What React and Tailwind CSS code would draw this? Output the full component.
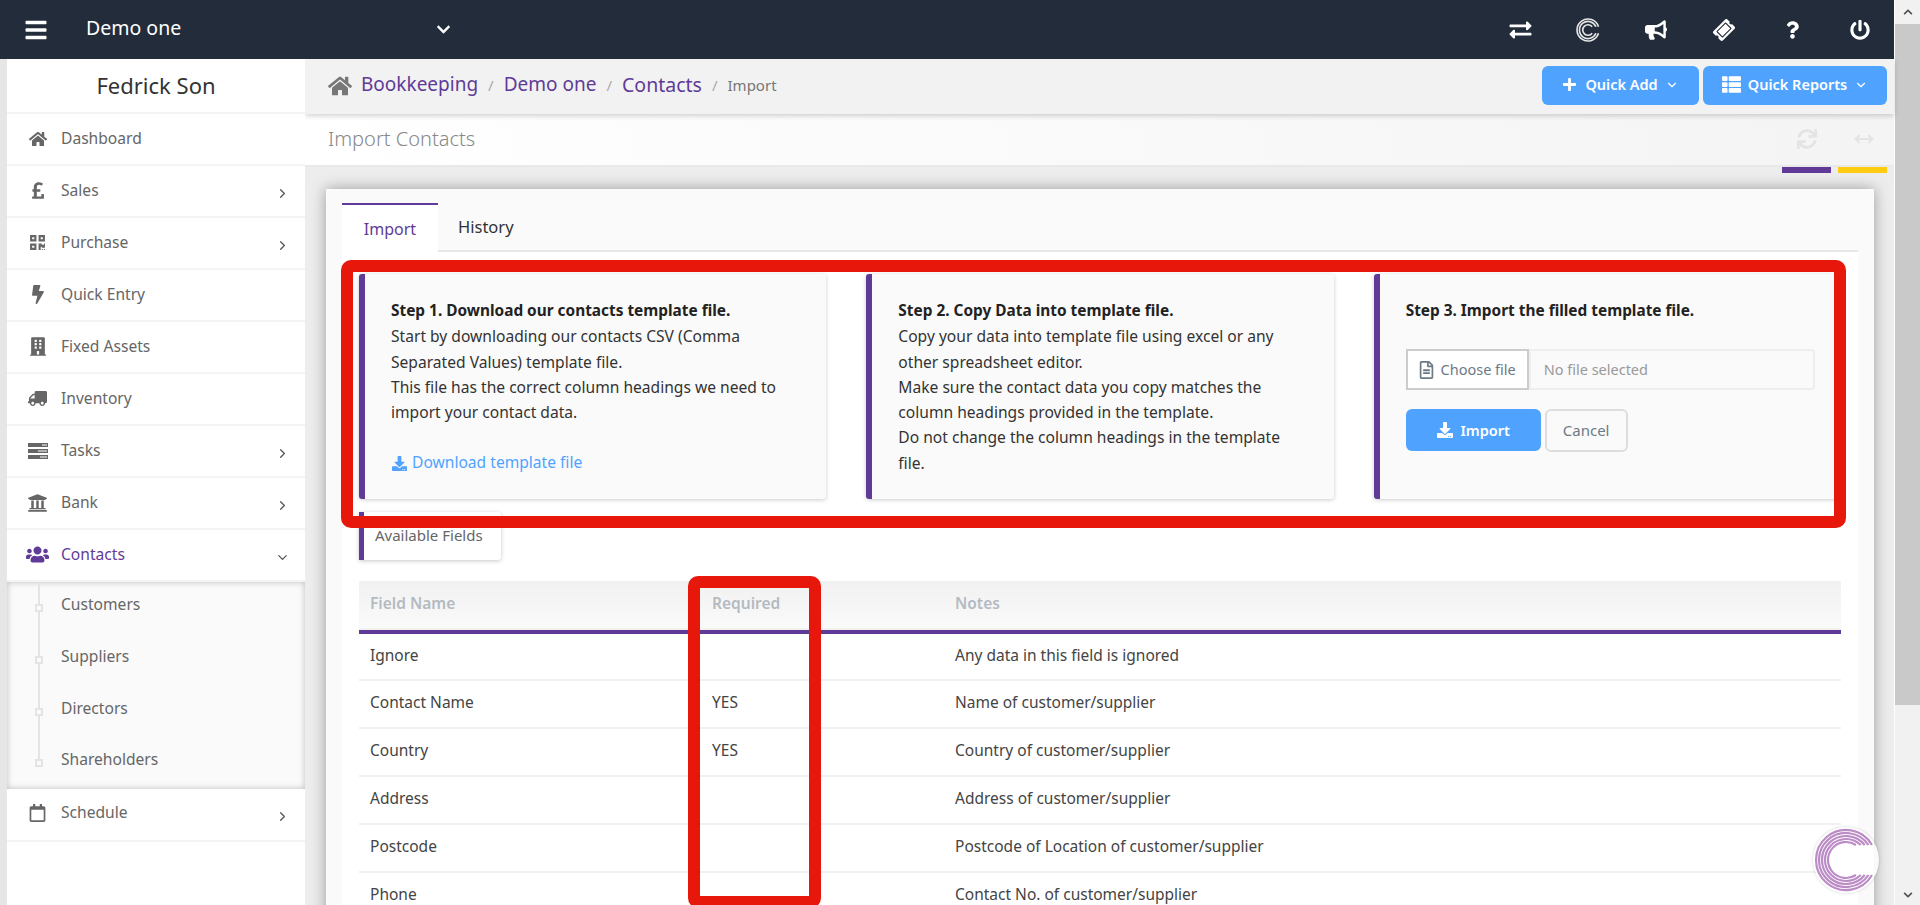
import {
    FaBars, FaBolt, FaBuilding, FaBullhorn, FaChevronDown, FaChevronUp, FaDownload, FaExchangeAlt,
    FaHome, FaPlus, FaPoundSign, FaPowerOff, FaQrcode, FaQuestion, FaRegCalendar, FaRegFileAlt,
    FaSync, FaThList, FaTicketAlt, FaTruck, FaUniversity, FaUsers,
} from 'react-icons/fa';
import { ChevronDown, ChevronRight, MoveHorizontal } from 'lucide-react';

function TasksIcon() {
    return (
        <svg viewBox="0 0 20 16" className="w-[20px] h-[16px]" fill="currentColor">
            <path d="M0 0h20v4H0zM0 6h20v4H0zM0 12h20v4H0z" />
            <path d="M14 1.5h5v1h-5zM10 7.5h9v1h-9zM12 13.5h7v1h-7z" fill="#fff" />
        </svg>
    );
}

// concentric C, used for the header icon and the floating logo
function RingsC({ size, color, rings, stroke, gap }) {
    return (
        <svg viewBox="0 0 64 64" width={size} height={size} fill="none" stroke={color}>
            {rings.map((r) => {
                const dx = Math.sqrt(r * r - gap * gap);
                return (
                    <path
                        key={r}
                        d={`M ${32 + dx} ${32 - gap} A ${r} ${r} 0 1 0 ${32 + dx} ${32 + gap}`}
                        strokeWidth={stroke}
                    />
                );
            })}
        </svg>
    );
}

const menu = [
    { label: 'Dashboard', icon: <FaHome className="w-[18px] h-[18px]" /> },
    { label: 'Sales', icon: <FaPoundSign className="w-[16px] h-[19px]" />, arrow: true },
    { label: 'Purchase', icon: <FaQrcode className="w-[17px] h-[17px]" />, arrow: true },
    { label: 'Quick Entry', icon: <FaBolt className="w-[14px] h-[19px]" /> },
    { label: 'Fixed Assets', icon: <FaBuilding className="w-[16px] h-[19px]" /> },
    { label: 'Inventory', icon: <FaTruck className="w-[19px] h-[17px] -scale-x-100" /> },
    { label: 'Tasks', icon: <TasksIcon />, arrow: true },
    { label: 'Bank', icon: <FaUniversity className="w-[21px] h-[20px]" />, arrow: true },
    { label: 'Contacts', icon: <FaUsers className="w-[23px] h-[23px]" />, open: true },
];

function MenuRow({ item }) {
    return (
        <div className={`h-[52px] flex items-center pl-[19px] pr-[15px] pb-[1px] border-b-2 border-[#f4f4f4] ${item.open ? 'text-[#5f3b97]' : 'text-[#666]'}`}>
            <span className="w-[23px] flex justify-center shrink-0">{item.icon}</span>
            <span className="ml-[12px] flex-1 text-[15.6px]">{item.label}</span>
            {item.arrow && <ChevronRight className="w-[15px] h-[15px] mt-[6px] text-[#555]" />}
            {item.open && <ChevronDown className="w-[15px] h-[15px] mt-[6px] text-[#555]" />}
        </div>
    );
}

function Sidebar() {
    return (
        <aside className="w-[298px] ml-[7px] bg-white shrink-0 relative z-10">
            <div className="h-[55px] flex items-center justify-center border-b-2 border-[#f4f4f4] text-[22px] text-[#333]">
                Fedrick Son
            </div>
            {menu.map((m) => (
                <MenuRow key={m.label} item={m} />
            ))}
            <div className="h-[207px] bg-[#fafafa] shadow-[inset_0_0_6px_rgba(0,0,0,0.25)]">
                <ul className="ml-[31px] border-l-2 border-[#e4e4e4] h-[180px]">
                    {['Customers', 'Suppliers', 'Directors', 'Shareholders'].map((s) => (
                        <li key={s} className="relative h-[51.75px] flex items-center pl-[21px] pb-[6px] text-[15.6px] text-[#666]">
                            <span className="absolute -left-[5px] top-[22px] w-[8px] h-[8px] border-2 border-[#e4e4e4] bg-[#fafafa]" />
                            {s}
                        </li>
                    ))}
                </ul>
            </div>
            <div className="h-[53px] flex items-center pl-[19px] pr-[15px] pb-[4px] border-b-2 border-[#f4f4f4] text-[#666]">
                <span className="w-[23px] flex justify-center shrink-0"><FaRegCalendar className="w-[17px] h-[18px]" /></span>
                <span className="ml-[12px] flex-1 text-[15.6px]">Schedule</span>
                <ChevronRight className="w-[15px] h-[15px] mt-[8px] text-[#555]" />
            </div>
        </aside>
    );
}

function Breadcrumb() {
    return (
        <div className="h-[55px] bg-[#f2f2f2] flex items-center pl-[23px] pr-[7px] pb-[2px] shadow-[0_2px_5px_rgba(0,0,0,0.18)] relative z-[5]">
            <FaHome className="w-[24px] h-[24px] text-[#777]" />
            <a className="ml-[9px] pb-[2px] text-[19px] text-[#5f3b97]">Bookkeeping</a>
            <span className="mx-[10px] text-[#aaa] text-[15px]">/</span>
            <a className="pb-[2px] text-[19px] text-[#5f3b97]">Demo one</a>
            <span className="mx-[10px] text-[#aaa] text-[15px]">/</span>
            <a className="pb-[2px] text-[19.5px] text-[#5f3b97]">Contacts</a>
            <span className="mx-[10px] text-[#aaa] text-[15px]">/</span>
            <span className="text-[15px] text-[#777]">Import</span>
            <div className="ml-auto flex gap-[4px]">
                <button className="w-[157px] h-[39px] rounded-[6px] bg-[#4fa3ff] text-white text-[14.5px] font-semibold pb-[2px] flex items-center justify-center">
                    <FaPlus className="w-[15px] h-[15px] mr-[8px]" />
                    Quick Add
                    <ChevronDown className="w-[14px] h-[14px] ml-[7px]" />
                </button>
                <button className="w-[184px] h-[39px] rounded-[6px] bg-[#4fa3ff] text-white text-[14.5px] font-semibold pb-[2px] flex items-center justify-center">
                    <FaThList className="w-[19px] h-[19px] mr-[7px]" />
                    Quick Reports
                    <ChevronDown className="w-[14px] h-[14px] ml-[7px]" />
                </button>
            </div>
        </div>
    );
}

function StepCard({ children }) {
    return (
        <div className="h-[225px] bg-[#fafafa] border-l-[6px] border-[#5f3b97] rounded-[3px] shadow-[0_1px_4px_rgba(0,0,0,0.2)] pl-[26px] pr-[35px] pt-[24px] text-[15.6px] leading-[25.3px] text-[#333]">
            {children}
        </div>
    );
}

function StepTitle({ children }) {
    return <b className="block mb-[1px] font-bold text-[15.4px] text-[#222]">{children}</b>;
}

function ImportSteps() {
    return (
        <div className="grid grid-cols-3 gap-[40px]">
            <StepCard>
                <StepTitle>Step 1. Download our contacts template file.</StepTitle>
                <p>Start by downloading our contacts CSV (Comma Separated Values) template file.</p>
                <p>This file has the correct column headings we need to import your contact data.</p>
                <a className="mt-[25px] flex items-center text-[#4fa3ff]">
                    <FaDownload className="w-[17px] h-[15px] mr-[4px]" />
                    Download template file
                </a>
            </StepCard>
            <StepCard>
                <StepTitle>Step 2. Copy Data into template file.</StepTitle>
                <p>Copy your data into template file using excel or any other spreadsheet editor.</p>
                <p>Make sure the contact data you copy matches the column headings provided in the template.</p>
                <p>Do not change the column headings in the template file.</p>
            </StepCard>
            <StepCard>
                <StepTitle>Step 3. Import the filled template file.</StepTitle>
                <div className="mt-[26px] flex h-[41px] w-[409px]">
                    <div className="w-[123px] bg-white border-2 border-[#ccc] flex items-center justify-center text-[#6c7a86] text-[14.5px]">
                        <FaRegFileAlt className="w-[15px] h-[18px] mr-[7px]" />
                        Choose file
                    </div>
                    <div className="flex-1 border-2 border-[#eee] rounded-r-[4px] flex items-center pl-[13px] text-[14.5px] text-[#999]">
                        No file selected
                    </div>
                </div>
                <div className="mt-[19px] flex gap-[4px]">
                    <button className="w-[135px] h-[42px] rounded-[6px] bg-[#4fa3ff] text-white text-[14.5px] font-semibold flex items-center justify-center">
                        <FaDownload className="w-[18px] h-[16px] mr-[6px]" />
                        Import
                    </button>
                    <button className="w-[83px] h-[43px] rounded-[6px] border-2 border-[#ddd] text-[#6c7a86] text-[15px]">
                        Cancel
                    </button>
                </div>
            </StepCard>
        </div>
    );
}

const fields = [
    ['Ignore', '', 'Any data in this field is ignored'],
    ['Contact Name', 'YES', 'Name of customer/supplier'],
    ['Country', 'YES', 'Country of customer/supplier'],
    ['Address', '', 'Address of customer/supplier'],
    ['Postcode', '', 'Postcode of Location of customer/supplier'],
    ['Phone', '', 'Contact No. of customer/supplier'],
];

function FieldsTable() {
    return (
        <table className="mt-[21px] w-full table-fixed text-[15.5px] text-[#444]">
            <thead>
                <tr className="h-[51px] bg-gradient-to-b from-[#f1f1f1] to-[#fafafa] border-b-4 border-[#5f3b97] text-left text-[#b4bac2]">
                    <th className="w-[342px] pl-[11px] font-semibold pb-[4px]">Field Name</th>
                    <th className="w-[243px] pl-[11px] font-semibold pb-[4px]">Required</th>
                    <th className="pl-[11px] font-semibold pb-[4px]">Notes</th>
                </tr>
            </thead>
            <tbody>
                {fields.map((f) => (
                    <tr key={f[0]} className="h-[48px] border-b-2 border-[#f1f1f1]">
                        <td className="pl-[11px] pb-[2px]">{f[0]}</td>
                        <td className="pl-[11px] pb-[2px]">{f[1]}</td>
                        <td className="pl-[11px] pb-[2px]">{f[2]}</td>
                    </tr>
                ))}
            </tbody>
        </table>
    );
}

function ContentCard() {
    return (
        <div className="mt-[16px] ml-[21px] mr-[20px] bg-[#fafafa] px-[16px] pt-[14px] shadow-[0_0_14px_rgba(0,0,0,0.35)]">
            <div className="flex h-[49px] border-b-2 border-[#e8e8e8] pr-[1px]">
                <div className="w-[96px] bg-white border-t-2 border-[#5f3b97] flex items-center justify-center text-[#5f3b97] text-[16px] h-[49px]">
                    Import
                </div>
                <div className="ml-[20px] flex items-center text-[16.5px] text-[#333] pt-[1px]">History</div>
            </div>
            <div className="bg-white px-[17px] pt-[22px] pb-[40px]">
                <ImportSteps />
                <div className="mt-[13px] w-[142px] h-[48px] bg-white border-l-[5px] border-[#5f3b97] rounded-r-[3px] shadow-[0_1px_4px_rgba(0,0,0,0.22)] pl-[11px] pt-[12px] text-[15px] text-[#666]">
                    Available Fields
                </div>
                <FieldsTable />
            </div>
        </div>
    );
}

export default function App() {
    return (
        <div className="relative flex h-[905px] w-[1920px] overflow-hidden font-['Noto_Sans',sans-serif]">
            <div className="w-[1894px] flex flex-col shrink-0">
                <header className="h-[59px] bg-[#232c3a] text-white flex items-center shrink-0 relative z-20">
                    <FaBars className="ml-[25px] w-[22px] h-[24px]" />
                    <span className="ml-[39px] text-[19.5px] pb-[4px]">Demo one</span>
                    <FaChevronDown className="ml-[254px] w-[17px] h-[15px]" />
                    <div className="ml-auto mr-[21px] flex items-center">
                        {[
                            <FaExchangeAlt key="a" className="w-[23px] h-[22px]" />,
                            <RingsC key="b" size={26} color="#e6e6e6" rings={[13, 21, 27]} stroke={4} gap={8} />,
                            <FaBullhorn key="c" className="w-[22px] h-[22px]" />,
                            <FaTicketAlt key="d" className="w-[20px] h-[20px] -rotate-45" />,
                            <FaQuestion key="e" className="w-[13px] h-[18px]" />,
                            <FaPowerOff key="f" className="w-[20px] h-[22px]" />,
                        ].map((icon, i) => (
                            <span key={i} className={`w-[26px] flex justify-center ${i > 0 ? 'ml-[42px]' : ''}`}>{icon}</span>
                        ))}
                    </div>
                </header>
                <div className="flex flex-1 min-h-0 bg-[#e6e6e6]">
                    <Sidebar />
                    <main className="flex-1 min-w-0 bg-[#ededed]">
                        <Breadcrumb />
                        <div className="h-[53px] bg-gradient-to-r from-white to-[#f4f4f4] border-b-2 border-[#e9e9e9] flex items-center pl-[23px] pb-[2px]">
                            <h1 className="text-[20px] font-light text-[#888] flex-1">Import Contacts</h1>
                            <FaSync className="w-[20px] h-[22px] text-[#e4e4e4]" />
                            <MoveHorizontal strokeWidth={2.6} className="ml-[34px] mr-[17px] w-[26px] h-[20px] text-[#e4e4e4]" />
                        </div>
                        <div className="flex justify-end gap-[7px] pr-[7px]">
                            <span className="w-[49px] h-[6px] bg-[#5f3b97]" />
                            <span className="w-[49px] h-[6px] bg-[#ffcc12]" />
                        </div>
                        <ContentCard />
                    </main>
                </div>
            </div>
            <div className="flex-1 border-l border-white bg-[#f1f1f1] flex flex-col items-center">
                <div className="h-[24px] flex items-center justify-center"><FaChevronUp className="w-[12px] h-[10px] text-[#505050]" /></div>
                <div className="w-full h-[681px] bg-[#c9c9c9]" />
                <div className="mt-auto h-[20px] flex items-center justify-center"><FaChevronDown className="w-[12px] h-[10px] text-[#505050]" /></div>
            </div>

            {/* red annotation boxes + floating logo sit above the page */}
            <div className="absolute left-[341px] top-[260px] w-[1505px] h-[268px] border-[12px] border-[#e8170b] rounded-[10px] z-30" />
            <div className="absolute left-[688px] top-[576px] w-[133px] h-[332px] border-[12px] border-[#e8170b] rounded-[10px] z-30" />
            <div className="absolute left-[1813px] top-[827px] w-[66px] h-[66px] rounded-full bg-white/90 shadow-[0_0_3px_rgba(0,0,0,0.2)] flex items-center justify-center z-30">
                <RingsC size={64} color="#bb8cc6" rings={[18, 21, 24, 27, 30]} stroke={2.2} gap={15} />
            </div>
        </div>
    );
}
